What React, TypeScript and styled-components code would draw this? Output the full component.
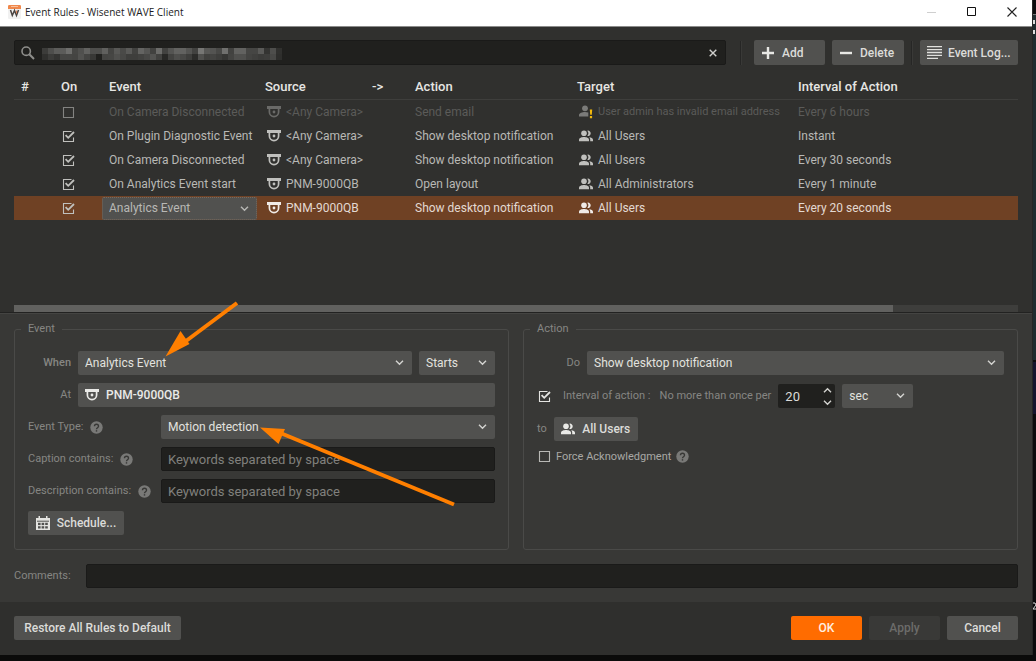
import React, { useState } from "react";
import styled, { createGlobalStyle, css } from "styled-components";

const GlobalStyle = createGlobalStyle`
  *, *::before, *::after { box-sizing: border-box; }
  body { margin: 0; background: #0b0b0a; }
  button, input, select { font: inherit; color: inherit; margin: 0; }
`;

/* ---------- window ---------- */

const Desktop = styled.div`
  position: relative;
  display: flex;
  flex-direction: column;
  min-height: 100vh;
  padding: 0 3px 6px 0;
  overflow: hidden;
  font: 12px/16px Roboto, "Liberation Sans", sans-serif;
  color: #b8b8b5;
`;

const Backdrop = styled.svg`
  position: absolute;
  top: 0;
  right: 0;
  width: 4px;
  height: 661px;
`;

const Window = styled.main`
  position: relative;
  flex: 1;
  display: flex;
  flex-direction: column;
  background: #30302e;
  border-right: 1px solid #262625;
`;

const TitleBar = styled.header`
  display: flex;
  align-items: center;
  height: 27px;
  padding: 0 0 2px 8px;
  background: #fff;
  border-bottom: 1px solid #8b8b8a;
  color: #1b1b22;
`;

const Title = styled.h1`
  flex: 1;
  margin: 0 0 0 4px;
  font: 400 10px/16px "Open Sans", "Noto Sans", sans-serif;
`;

const CaptionButton = styled.button`
  display: grid;
  place-items: center;
  width: 40px;
  height: 24px;
  padding: 0;
  border: 0;
  background: none;
`;

/* ---------- shared controls ---------- */

const Button = styled.button<{ $tone?: "primary" | "muted"; $width?: number }>`
  display: inline-flex;
  align-items: center;
  justify-content: center;
  gap: 7px;
  height: 24px;
  min-width: ${(p) => (p.$width ? p.$width + "px" : "0")};
  padding: 0 7px;
  border: 0;
  border-radius: 2px;
  background: #51514f;
  color: #dcdcd9;
  font-weight: 500;
  white-space: nowrap;
  ${(p) => p.$tone === "primary" && css`background: #ff6c00; color: #fff0e0;`}
  ${(p) => p.$tone === "muted" && css`background: #393937; color: #6c6c6a;`}
`;

const ToolButton = styled(Button)`
  justify-content: flex-start;
  height: 25px;
  padding: 0 5px 0 8px;
  gap: 8px;
`;

const LogButton = styled(ToolButton)`
  padding: 0 5px 0 7px;
  gap: 6px;
`;

const fieldBase = css`
  width: 100%;
  height: 24px;
  border: 0;
  border-radius: 2px;
  padding: 0 7px;
  outline: 0;
`;

const TextInput = styled.input`
  ${fieldBase}
  flex: 1;
  min-width: 0;
  background: #20201e;
  border: 1px solid #1a1a19;
  padding: 0 6px;
  color: #e4e4e1;
  font-size: 13px;
  &::placeholder { color: #80807d; opacity: 1; }
`;

const SelectBox = styled.span<{ $width?: number }>`
  position: relative;
  display: flex;
  ${(p) => (p.$width ? css`flex: 0 0 ${p.$width}px;` : css`flex: 1; min-width: 0;`)}
  > svg {
    position: absolute;
    right: 8px;
    top: 8px;
    pointer-events: none;
  }
`;

const NativeSelect = styled.select`
  ${fieldBase}
  appearance: none;
  background: #51514f;
  color: #e2e2df;
`;

const CellSelect = styled(NativeSelect)`
  height: 23px;
  border: 1px dotted #7b6a5c;
  padding: 0 6px;
  color: #b8b8b5;
`;

const Chevron = ({ up, color = "#d4d4d1" }: { up?: boolean; color?: string }) => (
  <svg width="9" height="7" viewBox="0 0 9 7" fill="none" stroke={color} strokeWidth="1.4">
    <path d={up ? "M1 5.2 4.5 1.8 8 5.2" : "M1 1.8 4.5 5.2 8 1.8"} />
  </svg>
);

const Select = ({ options, label, id, width }: { options: string[]; label?: string; id?: string; width?: number }) => (
  <SelectBox $width={width}>
    <NativeSelect id={id} aria-label={label}>
      {options.map((o) => <option key={o}>{o}</option>)}
    </NativeSelect>
    <Chevron />
  </SelectBox>
);

const CheckWrap = styled.span`
  position: relative;
  display: flex;
  flex: 0 0 13px;
  width: 13px;
  height: 13px;
  > svg { position: absolute; inset: 0; pointer-events: none; }
`;

const NativeCheck = styled.input`
  appearance: none;
  width: 13px;
  height: 13px;
`;

const Check = ({ initial, color, id, label }: { initial: boolean; color: string; id?: string; label?: string }) => {
  const [on, setOn] = useState(initial);
  return (
    <CheckWrap>
      <NativeCheck type="checkbox" id={id} aria-label={label} checked={on} onChange={() => setOn(!on)} />
      <svg width="13" height="13" viewBox="0 0 13 13" fill="none" stroke={color}>
        {on ? (
          <>
            <path d="M9.5 1.5h-8v10h10v-4" strokeWidth="1.1" />
            <path d="M3.6 5.2 6.2 7.8 12 2" strokeWidth="1.8" />
          </>
        ) : (
          <path d="M1.5 1.5h10v10h-10z" strokeWidth="1.1" />
        )}
      </svg>
    </CheckWrap>
  );
};

/* ---------- icons ---------- */

const AppIcon = () => (
  <svg width="13" height="14" viewBox="0 0 13 14">
    <path d="M0 1.2Q0 0 1.2 0h10.6Q13 0 13 1.2V4H0z" fill="#f0884c" />
    <path d="M3 1.5h7" stroke="#f9c09c" strokeWidth="1" />
    <path d="M0 4h13v8.8q0 1.2-1.2 1.2H1.2Q0 14 0 12.8z" fill="#f1f1f1" />
    <path d="M2.5 5 4.3 10.5 6.5 5.5 8.5 10.5 10.5 5" fill="none" stroke="#4a4442" strokeWidth="1.5" />
    <path d="M8.5 5.5v3" stroke="#e08458" strokeWidth="1" />
  </svg>
);

const CameraIcon = ({ color }: { color: string }) => (
  <svg width="14" height="12" viewBox="0 0 14 12">
    <path d="M0 0h14v3H0z" fill={color} />
    <path d="M2.4 2.5v3.5a4.6 4.6 0 0 0 9.2 0V2.5" fill="none" stroke={color} strokeWidth="1.7" />
    <circle cx="7" cy="6" r="1.4" fill={color} />
  </svg>
);

const UsersIcon = ({ color }: { color: string }) => (
  <svg width="14" height="12" viewBox="0 0 14 12" fill={color}>
    <circle cx="5" cy="3.3" r="2.8" />
    <path d="M0 11.3V9.7C0 7.8 2.8 7 5 7s5 .8 5 2.7v1.6z" />
    <path d="M8.3.7a2.7 2.7 0 1 1 0 5.2 4 4 0 0 0 0-5.2z" />
    <path d="M10.2 7.2c2 .2 3.8 1 3.8 2.6v1.5h-2.8V9.6c0-1-.4-1.8-1-2.4z" />
  </svg>
);

const UserWarningIcon = () => (
  <svg width="15" height="14" viewBox="0 0 15 14">
    <circle cx="6" cy="3.3" r="2.9" fill="#7b7b79" />
    <path d="M0 11.5V10c0-2 3.3-3 6-3 1.2 0 2.3.2 3.3.5v4z" fill="#7b7b79" />
    <path d="M10.8 4.5h2.4l-.4 5.2h-1.6zM10.900 11h2.2v2.2h-2.2z" fill="#f2b90d" />
  </svg>
);

const HelpIcon = () => (
  <svg width="13" height="13" viewBox="0 0 13 13">
    <circle cx="6.5" cy="6.5" r="6.2" fill="#797977" />
    <path d="M4.5 5.2c0-2.6 4-2.6 4 0 0 1.5-2 1.5-2 3" fill="none" stroke="#383836" strokeWidth="1.4" />
    <path d="M5.8 9.2h1.4v1.4H5.8z" fill="#383836" />
  </svg>
);

const CalendarIcon = () => (
  <svg width="14" height="14" viewBox="0 0 14 14">
    <path d="M0 2h14v12H0zM2.5 0H4v2H2.5zM10 0h1.5v2H10z" fill="#e4e4e1" />
    <path d="M1 5.2h12" stroke="#51514f" strokeWidth="1" />
    <g fill="#51514f">
      {[6.8, 10.2].map((y) =>
        [2, 5.6, 9.2].map((x) => <path key={`${x}-${y}`} d={`M${x} ${y}h2.6v2.3h-2.6z`} />)
      )}
    </g>
  </svg>
);

const SearchIcon = () => (
  <svg width="14" height="14" viewBox="0 0 14 14" fill="none" stroke="#8e8e8b">
    <circle cx="5.2" cy="5.2" r="4.2" strokeWidth="1.6" />
    <path d="M8.3 8.3 13 13" strokeWidth="2" />
  </svg>
);

/* ---------- rules list ---------- */

const ListPanel = styled.section`
  flex: 1;
  display: flex;
  flex-direction: column;
  padding: 13px 14px 0;
`;

const Toolbar = styled.div`
  display: flex;
  align-items: center;
  gap: 7px;
`;

const SearchField = styled.div`
  flex: 1;
  display: flex;
  align-items: center;
  gap: 7px;
  height: 25px;
  padding: 0 6px;
  background: #20201e;
  border: 1px solid #1a1a19;
  border-radius: 2px;
`;

const SearchValue = styled.div`
  position: relative;
  flex: 1;
  display: flex;
  height: 23px;
  > svg { position: absolute; left: 0; top: 7px; pointer-events: none; }
`;

const SearchInput = styled.input`
  width: 100%;
  border: 0;
  outline: 0;
  padding: 0;
  background: none;
`;

const ClearButton = styled.button`
  display: grid;
  place-items: center;
  padding: 0;
  width: 12px;
  height: 16px;
  border: 0;
  background: none;
`;

const Separator = styled.span`
  width: 2px;
  height: 24px;
  margin: 0 5px 0 7px;
  background: #262625;
  border-right: 1px solid #393937;
`;

const ThinSeparator = styled(Separator)`
  margin: 0;
`;

/* Brightness of each censored block, two rows of forty. */
const MOSAIC = [
  [60, 78, 92, 92, 110, 70, 80, 98, 78, 78, 96, 68, 88, 74, 90, 66, 100, 86, 66, 108, 66, 84, 98, 98, 84, 66, 118, 88, 84, 72, 112, 66, 98, 98, 70, 70, 90, 52, 78, 48],
  [48, 60, 52, 70, 70, 68, 82, 68, 56, 32, 68, 70, 80, 72, 62, 62, 66, 72, 84, 66, 40, 66, 78, 72, 62, 44, 80, 64, 68, 62, 54, 68, 80, 80, 68, 64, 60, 62, 72, 46],
];

const Mosaic = () => (
  <svg width="240" height="12" shapeRendering="crispEdges">
    {MOSAIC.map((row, y) =>
      row.map((v, x) => (
        <rect key={`${x}-${y}`} x={x * 6} y={y * 6} width="6" height="6" fill={`rgb(${v},${v},${v - 2})`} />
      ))
    )}
  </svg>
);

const Table = styled.table`
  width: 100%;
  margin-top: 9px;
  table-layout: fixed;
  border-collapse: separate;
  border-spacing: 0;
`;

const Th = styled.th<{ $w?: number }>`
  ${(p) => p.$w && css`width: ${p.$w}px;`}
  height: 26px;
  padding: 0 7px;
  border-bottom: 1px solid #3e3e3c;
  text-align: left;
  font-size: 13px;
  font-weight: 500;
  color: #e6e6e3;
  white-space: nowrap;
`;

const Tr = styled.tr<{ $state?: "off" | "selected" }>`
  color: ${(p) => (p.$state === "off" ? "#5b5b59" : p.$state === "selected" ? "#e3d9d2" : "#b8b8b5")};
  background: ${(p) => (p.$state === "selected" ? "#6f4124" : "none")};
`;

const Td = styled.td<{ $pad?: string }>`
  height: 24px;
  padding: ${(p) => p.$pad || "0 7px"};
  white-space: nowrap;
`;

const IconText = styled.span`
  display: flex;
  align-items: center;
  gap: 5px;
  padding-left: 2px;
  > svg { flex: none; }
`;

const TargetText = styled(IconText)<{ $warn?: boolean }>`
  gap: ${(p) => (p.$warn ? 4 : 5)}px;
  font-size: ${(p) => (p.$warn ? 11 : 12)}px;
`;

const ScrollTrack = styled.div`
  height: 7px;
  margin: auto 0 1px;
  background: #3e3e3c;
`;

const ScrollThumb = styled.div`
  width: 87.5%;
  height: 100%;
  background: #61615f;
`;

type Rule = { on: boolean; state?: "off" | "selected"; event: string; source: string; action: string; target: string; interval: string };

const RULES: Rule[] = [
  { on: false, state: "off", event: "On Camera Disconnected", source: "<Any Camera>", action: "Send email", target: "User admin has invalid email address", interval: "Every 6 hours" },
  { on: true, event: "On Plugin Diagnostic Event", source: "<Any Camera>", action: "Show desktop notification", target: "All Users", interval: "Instant" },
  { on: true, event: "On Camera Disconnected", source: "<Any Camera>", action: "Show desktop notification", target: "All Users", interval: "Every 30 seconds" },
  { on: true, event: "On Analytics Event start", source: "PNM-9000QB", action: "Open layout", target: "All Administrators", interval: "Every 1 minute" },
  { on: true, state: "selected", event: "Analytics Event", source: "PNM-9000QB", action: "Show desktop notification", target: "All Users", interval: "Every 20 seconds" },
];

const RuleRow = ({ rule }: { rule: Rule }) => {
  const tint = rule.state === "off" ? "#6a6a68" : rule.state === "selected" ? "#f0ebe7" : "#c0c0bd";
  return (
    <Tr $state={rule.state}>
      <Td />
      <Td $pad="0 8px"><Check initial={rule.on} color={rule.on ? "#c0c0bd" : "#838381"} label={`Enable ${rule.event}`} /></Td>
      {rule.state === "selected" ? (
        <Td $pad="0 1px 0 0">
          <SelectBox>
            <CellSelect aria-label="Event"><option>{rule.event}</option></CellSelect>
            <Chevron color="#b8b8b5" />
          </SelectBox>
        </Td>
      ) : (
        <Td>{rule.event}</Td>
      )}
      <Td><IconText><CameraIcon color={tint} />{rule.source}</IconText></Td>
      <Td />
      <Td>{rule.action}</Td>
      <Td>
        <TargetText $warn={rule.state === "off"}>
          {rule.state === "off" ? <UserWarningIcon /> : <UsersIcon color={tint} />}
          {rule.target}
        </TargetText>
      </Td>
      <Td>{rule.interval}</Td>
    </Tr>
  );
};

/* ---------- rule editor ---------- */

const Editor = styled.section`
  display: flex;
  flex-direction: column;
  gap: 14px;
  padding: 7px 14px 14px;
  background: #383836;
  border-top: 1px solid #444442;
  box-shadow: 0 -1px 0 #222221;
`;

const Groups = styled.div`
  display: grid;
  grid-template-columns: minmax(0, 1fr) minmax(0, 1fr);
  gap: 14px;
`;

const Group = styled.fieldset`
  min-width: 0;
  margin: 0;
  padding: 14px 13px;
  border: 1px solid #4a4a48;
  border-radius: 3px;
`;

const Legend = styled.legend`
  margin-left: -7px;
  padding: 0 7px;
  font-size: 11px;
  color: #868683;
`;

const Rows = styled.div<{ $gap: number }>`
  display: flex;
  flex-direction: column;
  gap: ${(p) => p.$gap}px;
`;

const Row = styled.div<{ $gap?: number }>`
  display: flex;
  align-items: center;
  gap: ${(p) => p.$gap || 7}px;
`;

const Label = styled.label<{ $strong?: boolean; $bright?: boolean }>`
  color: ${(p) => (p.$bright ? "#a8a8a5" : "#868683")};
  font-size: 11px;
  font-weight: ${(p) => (p.$strong ? 500 : 400)};
  white-space: nowrap;
`;

const SideLabel = styled(Label)`
  width: 43px;
  text-align: right;
`;

const CommentsLabel = styled(Label)`
  width: 65px;
`;

const FilterLabel = styled.span`
  display: flex;
  align-items: center;
  gap: 7px;
  width: 126px;
  > svg { flex: none; }
`;

const PickerButton = styled(Button)`
  flex: 1;
  justify-content: flex-start;
  color: #eaeae7;
`;

const SpinBox = styled.span`
  position: relative;
  width: 57px;
`;

const NumberInput = styled.input`
  ${fieldBase}
  display: block;
  background: #20201e;
  color: #dcdcd9;
  font-size: 13px;
  appearance: textfield;
  &::-webkit-inner-spin-button { appearance: none; }
`;

const Steppers = styled.span`
  position: absolute;
  right: 3px;
  top: 0;
  display: flex;
  flex-direction: column;
`;

const Step = styled.button`
  display: grid;
  place-items: center;
  width: 9px;
  height: 12px;
  padding: 0;
  border: 0;
  background: none;
`;

const Footer = styled.footer`
  display: flex;
  align-items: center;
  gap: 7px;
  padding: 14px 14px 15px;
  background: #2f2f2d;
`;

const Spacer = styled.span`
  flex: 1;
`;

const CheckLine = styled(Row)`
  height: 13px;
  padding-left: 1px;
`;

const Annotations = styled.svg`
  position: absolute;
  left: 160px;
  top: 296px;
  pointer-events: none;
`;

const FilterRow = ({ id, text, children }: { id: string; text: string; children: React.ReactNode }) => (
  <Row>
    <FilterLabel>
      <Label htmlFor={id}>{text}</Label>
      <HelpIcon />
    </FilterLabel>
    {children}
  </Row>
);

export default function App() {
  return (
    <Desktop>
      <GlobalStyle />
      <Backdrop viewBox="0 0 4 661" preserveAspectRatio="none">
        <path d="M0 0h4v661H0z" fill="#0b0b0d" />
        <path d="M0 14h4v346H0z" fill="#1f2c2f" />
        <path d="M0 14h4v1H0z" fill="#777" />
        <path d="M0 362h4v52H0z" fill="#14142e" />
        <path d="M1 20h2v4H1zM1 30h2v4H1z" fill="#ddd" />
        <path d="M1 603h2l1 2-3 4h3" fill="none" stroke="#ddd" />
      </Backdrop>
      <Window>
        <TitleBar>
          <AppIcon />
          <Title>Event Rules - Wisenet WAVE Client</Title>
          <CaptionButton aria-label="Minimize">
            <svg width="10" height="10"><path d="M0 5.5h9" stroke="#cfcfcf" /></svg>
          </CaptionButton>
          <CaptionButton aria-label="Maximize">
            <svg width="10" height="10"><path d="M.5.5h8v8h-8z" fill="none" stroke="#111" /></svg>
          </CaptionButton>
          <CaptionButton aria-label="Close">
            <svg width="10" height="10"><path d="M.5.5l9 9M9.5.5l-9 9" stroke="#222" strokeWidth="1.1" /></svg>
          </CaptionButton>
        </TitleBar>

        <ListPanel>
          <Toolbar>
            <SearchField>
              <SearchIcon />
              <SearchValue>
                <SearchInput aria-label="Search rules" />
                <Mosaic />
              </SearchValue>
              <ClearButton aria-label="Clear search">
                <svg width="8" height="8"><path d="M.7.7l6.6 6.6M7.3.7.7 7.3" stroke="#cfcfcc" strokeWidth="1.4" /></svg>
              </ClearButton>
            </SearchField>
            <Separator />
            <ToolButton $width={71}>
              <svg width="12" height="12"><path d="M6 0v12M0 6h12" stroke="#e8e8e5" strokeWidth="2.4" /></svg>
              Add
            </ToolButton>
            <ToolButton $width={72}>
              <svg width="12" height="12"><path d="M0 6h12" stroke="#e8e8e5" strokeWidth="2.4" /></svg>
              Delete
            </ToolButton>
            <ThinSeparator />
            <LogButton $width={98}>
              <svg width="15" height="13" stroke="#e0e0dd" strokeWidth="1.3"><path d="M0 .7h15M0 3.6h15M0 6.500h15M0 9.4h15M0 12.3h11" /></svg>
              Event Log...
            </LogButton>
          </Toolbar>
          <Table>
            <thead>
              <tr>
                <Th $w={40}>#</Th>
                <Th $w={48}>On</Th>
                <Th $w={156}>Event</Th>
                <Th $w={107}>Source</Th>
                <Th $w={43}>-&gt;</Th>
                <Th $w={162}>Action</Th>
                <Th $w={221}>Target</Th>
                <Th>Interval of Action</Th>
              </tr>
            </thead>
            <tbody>
              {RULES.map((r, i) => <RuleRow key={i} rule={r} />)}
            </tbody>
          </Table>
          <ScrollTrack><ScrollThumb /></ScrollTrack>
        </ListPanel>

        <Editor>
          <Groups>
            <Group>
              <Legend>Event</Legend>
              <Rows $gap={8}>
                <Row>
                  <SideLabel $strong htmlFor="when">When</SideLabel>
                  <Select id="when" options={["Analytics Event"]} />
                  <Select label="Event state" options={["Starts"]} width={76} />
                </Row>
                <Row>
                  <SideLabel htmlFor="at">At</SideLabel>
                  <PickerButton id="at" type="button"><CameraIcon color="#eaeae7" />PNM-9000QB</PickerButton>
                </Row>
                <FilterRow id="type" text="Event Type:"><Select id="type" options={["Motion detection"]} /></FilterRow>
                <FilterRow id="caption" text="Caption contains:"><TextInput id="caption" placeholder="Keywords separated by space" /></FilterRow>
                <FilterRow id="description" text="Description contains:"><TextInput id="description" placeholder="Keywords separated by space" /></FilterRow>
                <Row><Button $width={96}><CalendarIcon />Schedule...</Button></Row>
              </Rows>
            </Group>
            <Group>
              <Legend>Action</Legend>
              <Rows $gap={9}>
                <Row>
                  <SideLabel htmlFor="do">Do</SideLabel>
                  <Select id="do" options={["Show desktop notification"]} />
                </Row>
                <Row>
                  <Row $gap={9}>
                    <CheckLine $gap={12}>
                      <Check id="limit" initial color="#e4e4e1" />
                      <Label htmlFor="limit">Interval of action :</Label>
                    </CheckLine>
                    <Label htmlFor="count">No more than once per</Label>
                  </Row>
                  <SpinBox>
                    <NumberInput id="count" type="number" defaultValue={20} />
                    <Steppers>
                      <Step aria-label="Increase"><Chevron up /></Step>
                      <Step aria-label="Decrease"><Chevron /></Step>
                    </Steppers>
                  </SpinBox>
                  <Select label="Interval unit" options={["sec"]} width={71} />
                </Row>
                <Row>
                  <Label htmlFor="to">to</Label>
                  <Button id="to" $width={84}><UsersIcon color="#eaeae7" />All Users</Button>
                </Row>
                <CheckLine $gap={5}>
                  <Check id="force" initial={false} color="#b8b8b5" />
                  <Label $bright htmlFor="force">Force Acknowledgment</Label>
                  <HelpIcon />
                </CheckLine>
              </Rows>
            </Group>
          </Groups>
          <Row>
            <CommentsLabel htmlFor="comments">Comments:</CommentsLabel>
            <TextInput id="comments" />
          </Row>
        </Editor>

        <Footer>
          <Button $width={167}>Restore All Rules to Default</Button>
          <Spacer />
          <Button $tone="primary" $width={71}>OK</Button>
          <Button $tone="muted" $width={71} disabled>Apply</Button>
          <Button $width={71}>Cancel</Button>
        </Footer>

        <Annotations width="300" height="215" stroke="#ff7f00" fill="#ff7f00">
          <path d="M77 7 22 48" strokeWidth="4" />
          <path d="M5.5 60.5 20.5 35 29.5 48z" stroke="none" />
          <path d="M294 208.5 118 136" strokeWidth="4" />
          <path d="M100 131.5 125 133 118.500 148z" stroke="none" />
        </Annotations>
      </Window>
    </Desktop>
  );
}
